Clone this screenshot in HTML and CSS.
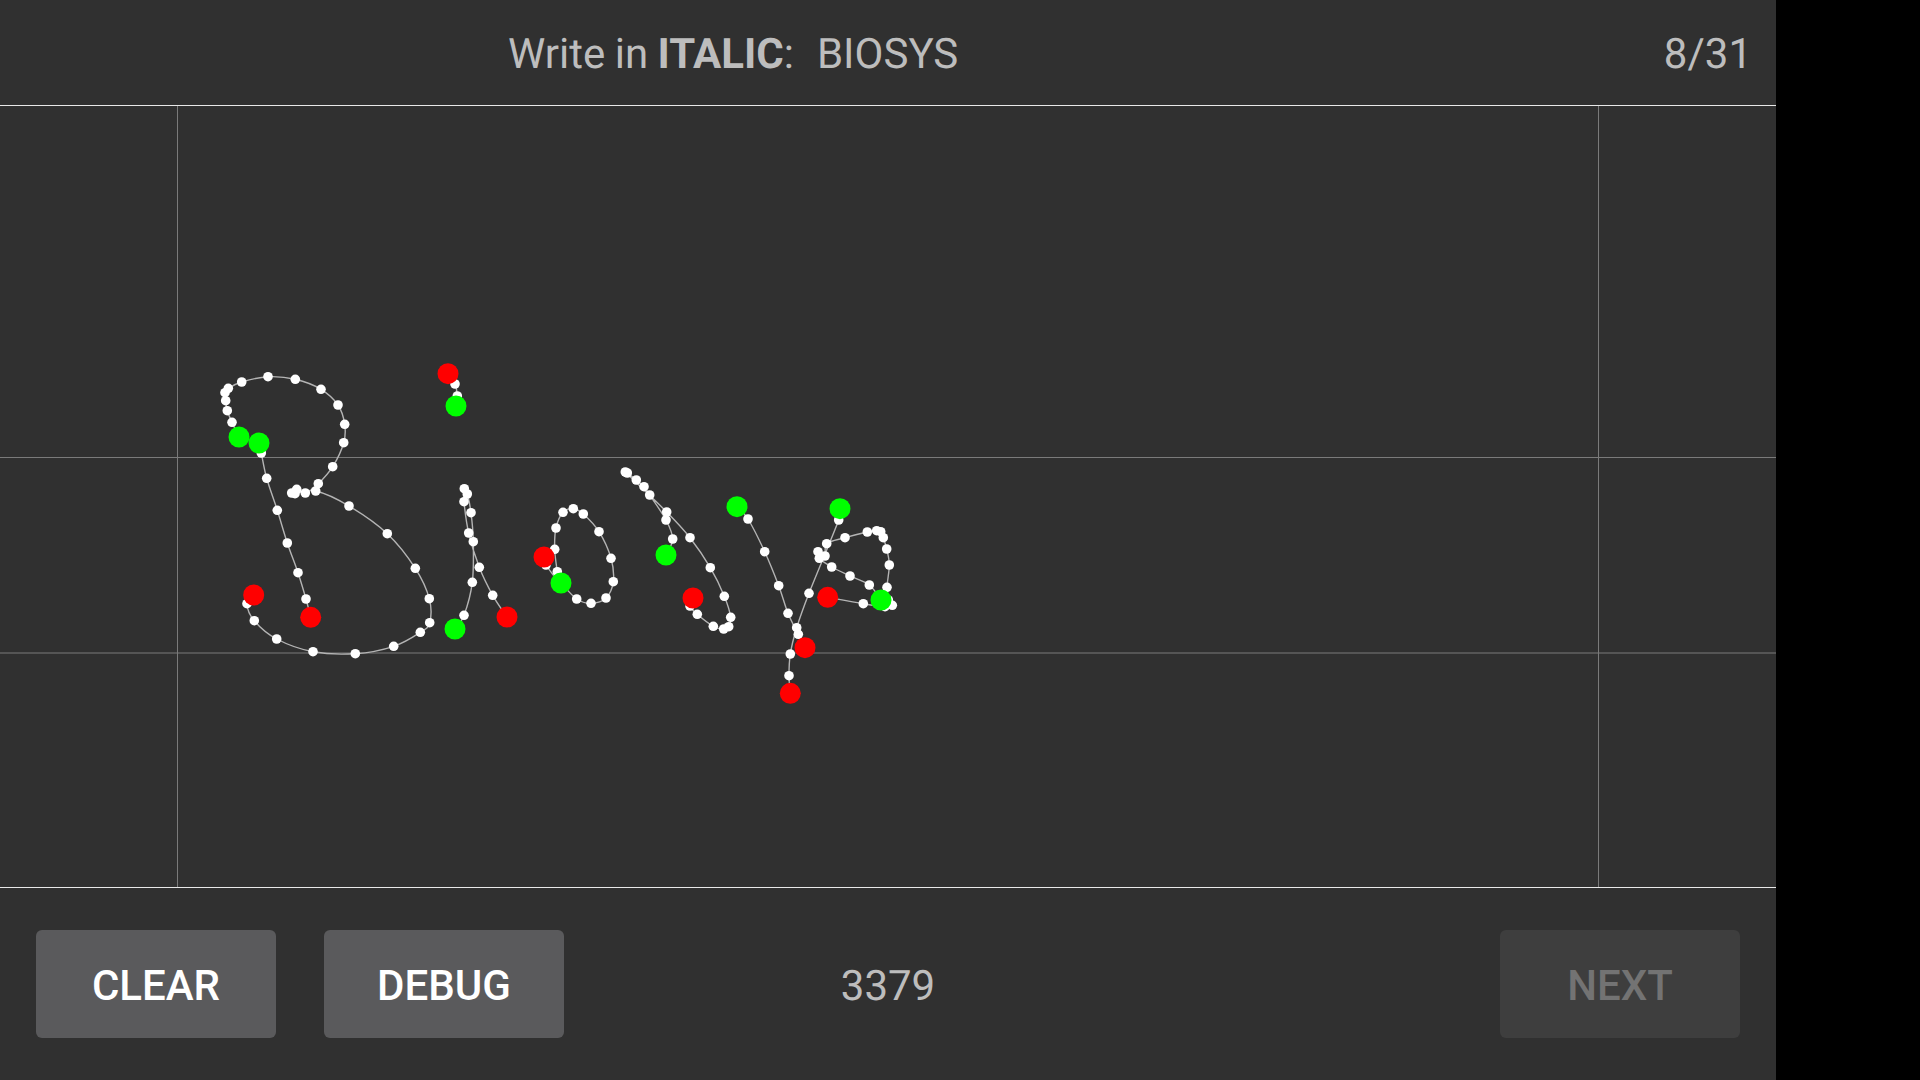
FILE: index.html
```html
<!DOCTYPE html>
<html lang="en">
  <head>
    <meta charset="UTF-8" />
    <meta name="viewport" content="width=device-width, initial-scale=1.0" />
    <title>Handwriting capture</title>
    <link rel="stylesheet" href="styles.css">
  </head>
  <body>
    <div class="app">
      <header class="prompt">
        <p class="prompt-text">Write in <b>ITALIC</b>:<span class="prompt-word">BIOSYS</span></p>
        <p class="counter">8/31</p>
      </header>
      <svg id="pad" class="pad" viewBox="0 106 1776 781"></svg>
      <footer class="controls">
        <button class="btn" type="button">CLEAR</button>
        <button class="btn" type="button">DEBUG</button>
        <span class="sample-id">3379</span>
        <button class="btn" type="button" disabled>NEXT</button>
      </footer>
    </div>
    <script src="script.js"></script>
  </body>
</html>
```

FILE: styles.css
```css
* {
  box-sizing: border-box;
  padding: 0;
  margin: 0;
}
body {
  background-color: black;
  font-family: Roboto, sans-serif;
  text-rendering: geometricPrecision;
  overflow: hidden;
}
.app {
  display: flex;
  flex-flow: column nowrap;
  width: 1776px;
  height: 1080px;
  background-color: #303030;
}
.prompt {
  display: flex;
  flex: none;
  align-items: center;
  justify-content: space-between;
  height: 106px;
  padding: 4px 24px 0 508px;
  border-bottom: solid 1px #e8e8e8;
  font-size: 42px;
  color: #bdbdbd;
}
.prompt-text {
  word-spacing: -1px;
}
.prompt-word {
  margin-left: 23px;
}
.pad {
  display: block;
  flex: none;
  width: 1776px;
  height: 781px;
}
.guide {
  stroke: #7a7a7a;
  stroke-width: 1;
}
.trace {
  fill: none;
  stroke: #b4b4b4;
  stroke-width: 1.4;
}
.dot {
  fill: white;
}
.start {
  fill: #00ff00;
}
.end {
  fill: #ff0000;
}
.controls {
  position: relative;
  display: flex;
  flex: 1;
  align-items: flex-start;
  gap: 48px;
  padding: 42px 36px 0;
  border-top: solid 1px #e8e8e8;
}
.btn {
  width: 240px;
  height: 108px;
  padding-top: 2px;
  border: none;
  border-radius: 6px;
  background-color: #5a5a5c;
  font-family: inherit;
  font-size: 42px;
  font-weight: 500;
  color: white;
}
.btn:disabled {
  margin-left: auto;
  background-color: #3e3e3e;
  color: #737373;
}
.sample-id {
  position: absolute;
  left: 0;
  right: 0;
  top: 45px;
  line-height: 108px;
  text-align: center;
  font-size: 42px;
  color: #bdbdbd;
}
```

FILE: script.js
```js
// traced pen strokes, first point is pen down (green), last is pen up (red)
const strokes = [
  [[239,437],[232,422.3],[227.3,410.7],[225.7,400.7],[225,392.7],[228.3,388.3],[241.7,382],[268,376.7],[295.3,379.3],[321,389.3],[338,405],[344.7,424.3],[343.7,442.7],[332.7,466.7],[318.3,483.7],[305.3,493],[296.7,489.3],[291.7,493],[295,493.7],[315.7,491],[349,506],[387.3,533.7],[415.3,568.3],[429.3,598.7],[429.7,622.7],[420.3,632.3],[393.7,646.3],[355.3,653.7],[313,651.7],[276.7,639],[254.3,620.7],[247,603.7],[253.7,595]],
  [[259,443],[261.3,453],[266.7,478.3],[277.3,510.3],[287.3,543],[298,572.7],[306,599],[310.7,617.3]],
  [[456,406],[457.3,396],[455,384],[448,373.7]],
  [[455,629],[464,615.3],[472.3,582.3],[473.3,541.7],[471,512.7],[467.3,494],[464.3,488.7],[464,501.7],[468.7,533],[479.3,567.3],[492.7,595.3],[507,617]],
  [[561,583],[576.7,599],[591,603.3],[606,598],[613.3,581.7],[611,558.3],[599,531.7],[583.3,514],[573.3,508.7],[563,512.3],[556,528],[554.7,549.3],[557.3,571.7],[559.3,581.7],[546,565],[544,557]],
  [[666,555],[672.7,539],[666,520],[649.7,495],[644,486.7],[636.3,480],[627.3,473],[625.3,472],[666.7,512],[690,537.7],[710.3,567.7],[724.3,596.3],[730.7,617.3],[728.7,626.7],[723.7,629],[713.3,626.3],[697.3,614.3],[690,606],[693,598]],
  [[737,506.7],[748,519],[764.7,551.7],[778.7,585.7],[788,613.3],[798.3,634.3],[805,647.7]],
  [[840,508.7],[838.7,520],[809,593.3],[796.7,627.7],[790.3,654],[789,675.7],[790.3,693.3]],
  [[881,600],[869.3,585],[850,576],[831.7,567],[819.3,558.3],[818,551.7],[825,556],[826.7,543.7],[845,537.7],[867.3,532],[876.7,530.7],[880.7,531.7],[883.3,537.7],[886.7,549],[889.3,565],[887,587.3],[888.3,600],[892.3,605.3],[885,606.7],[863.3,603.7],[827.7,597.3]],
];

const guides = [
  [177.5, 106, 177.5, 887],
  [1598.5, 106, 1598.5, 887],
  [0, 457.5, 1776, 457.5],
  [0, 653, 1776, 653],
];

const pad = document.getElementById("pad");

function add(tag, attrs) {
  const el = document.createElementNS("http://www.w3.org/2000/svg", tag);
  for (const k in attrs) el.setAttribute(k, attrs[k]);
  pad.appendChild(el);
}

// catmull-rom through the samples so the trace looks like the pen line
function smooth(pts) {
  let d = `M${pts[0][0]} ${pts[0][1]}`;
  for (let i = 0; i < pts.length - 1; i++) {
    const p0 = pts[i - 1] || pts[i];
    const p1 = pts[i];
    const p2 = pts[i + 1];
    const p3 = pts[i + 2] || p2;
    const c1x = p1[0] + (p2[0] - p0[0]) / 6;
    const c1y = p1[1] + (p2[1] - p0[1]) / 6;
    const c2x = p2[0] - (p3[0] - p1[0]) / 6;
    const c2y = p2[1] - (p3[1] - p1[1]) / 6;
    d += `C${c1x} ${c1y} ${c2x} ${c2y} ${p2[0]} ${p2[1]}`;
  }
  return d;
}

guides.forEach(([x1, y1, x2, y2]) => add("line", { class: "guide", x1, y1, x2, y2 }));
strokes.forEach((s) => add("path", { class: "trace", d: smooth(s) }));
strokes.forEach((s) => {
  s.slice(1, -1).forEach(([cx, cy]) => add("circle", { class: "dot", cx, cy, r: 4.8 }));
});
strokes.forEach((s) => {
  add("circle", { class: "start", cx: s[0][0], cy: s[0][1], r: 10.5 });
  const last = s[s.length - 1];
  add("circle", { class: "end", cx: last[0], cy: last[1], r: 10.5 });
});
```
